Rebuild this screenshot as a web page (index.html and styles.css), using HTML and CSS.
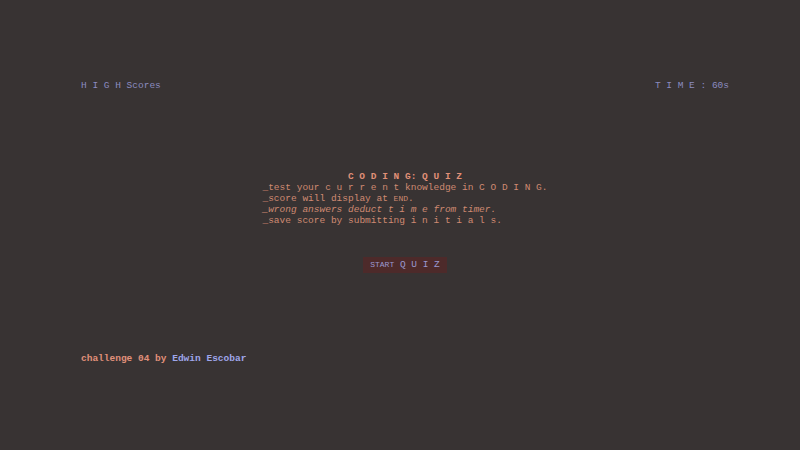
FILE: index.html
```html
<!DOCTYPE html>
<html>
<head>
<meta charset="utf-8">
<link rel="stylesheet" href="styles.css">
</head>
<body>
<div class="page">
  <header class="top">
    <span class="blue">H I G H Scores</span>
    <span class="blue">T I M E : 60s</span>
  </header>
  <main class="main">
    <div class="intro">
      <div class="title">C O D I N G: Q U I Z</div>
      <div class="line">_test your c u r r e n t knowledge in C O D I N G.</div>
      <div class="line">_score will display at <span class="sc">end</span>.</div>
      <div class="line italic">_wrong answers deduct t i m e from timer.</div>
      <div class="line">_save score by submitting i n i t i a l s.</div>
    </div>
    <button class="start"><span class="sc">start</span> Q U I Z</button>
  </main>
  <footer class="foot">challenge 04 by <span class="name">Edwin Escobar</span></footer>
</div>
</body>
</html>
```
FILE: styles.css
```css
html, body {
  margin: 0;
  padding: 0;
  background: #383333;
}
body {
  font-family: "Liberation Mono", "Courier New", monospace;
  font-size: 9.5px;
  width: 800px;
  height: 450px;
}
.page {
  display: flex;
  flex-direction: column;
  height: 450px;
  padding: 80px 71px 0 81px;
  box-sizing: border-box;
}
.top {
  display: flex;
  justify-content: space-between;
  line-height: 11px;
}
.blue { color: #8b8cc0; }
.main {
  display: flex;
  flex-direction: column;
  align-items: center;
  padding-top: 80px;
}
.intro {
  color: #cf8a72;
  line-height: 11px;
}
.title {
  text-align: center;
  font-weight: bold;
  color: #e09078;
}
.italic { font-style: italic; }
.sc {
  text-transform: uppercase;
  font-size: 8px;
}
.start {
  margin-top: 31px;
  font-family: inherit;
  font-size: 9.5px;
  color: #9a98d0;
  background: #4d2a2a;
  border: none;
  padding: 2px 7px;
  height: 16px;
  line-height: 12px;
}
.foot {
  margin-top: 80px;
  font-weight: bold;
  color: #e0907a;
  line-height: 11px;
}
.name { color: #9fa6ea; }
```
